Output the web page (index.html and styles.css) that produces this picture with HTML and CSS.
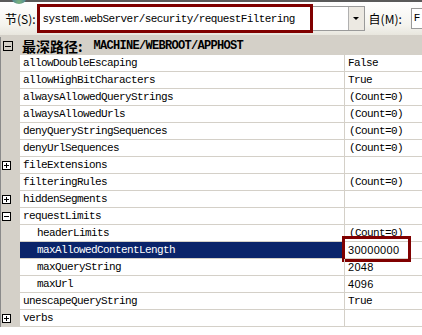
FILE: index.html
```html
<!DOCTYPE html>
<html>
<head>
<meta charset="utf-8">
<link rel="stylesheet" href="styles.css">
</head>
<body>
<div class="toolbar">
  <span class="globe"></span>
  <span class="label">节(S):</span>
  <div class="combo">
    <span class="combo-text">system.webServer/security/requestFiltering</span>
    <span class="combo-btn"><span class="tri"></span></span>
    <span class="hl hl-combo"></span>
  </div>
  <span class="label label-m">自(M):</span>
  <div class="from-box">F</div>
</div>
<div class="gap"></div>
<div class="grid">
  <div class="gut hdr"><span class="box minus big"></span></div>
  <div class="hdr hdr-text"><span class="cjk">最深路径:</span><span class="path">MACHINE/WEBROOT/APPHOST</span></div>
  <div class="hdr"></div>

  <div class="gut"></div><div class="name">allowDoubleEscaping</div><div class="val">False</div>
  <div class="gut"></div><div class="name">allowHighBitCharacters</div><div class="val">True</div>
  <div class="gut"></div><div class="name">alwaysAllowedQueryStrings</div><div class="val cnt">(Count=0)</div>
  <div class="gut"></div><div class="name">alwaysAllowedUrls</div><div class="val cnt">(Count=0)</div>
  <div class="gut"></div><div class="name">denyQueryStringSequences</div><div class="val cnt">(Count=0)</div>
  <div class="gut"></div><div class="name">denyUrlSequences</div><div class="val cnt">(Count=0)</div>
  <div class="gut"><span class="box plus"></span></div><div class="name">fileExtensions</div><div class="val"></div>
  <div class="gut"></div><div class="name">filteringRules</div><div class="val cnt">(Count=0)</div>
  <div class="gut"><span class="box plus"></span></div><div class="name">hiddenSegments</div><div class="val"></div>
  <div class="gut"><span class="box minus"></span></div><div class="name">requestLimits</div><div class="val"></div>
  <div class="gut"></div><div class="name sub">headerLimits</div><div class="val cnt">(Count=0)</div>
  <div class="gut"></div><div class="name sub sel">maxAllowedContentLength</div><div class="val num"><span>30000000</span><span class="hl hl-val"></span></div>
  <div class="gut"></div><div class="name sub">maxQueryString</div><div class="val num">2048</div>
  <div class="gut"></div><div class="name sub">maxUrl</div><div class="val num">4096</div>
  <div class="gut"></div><div class="name">unescapeQueryString</div><div class="val">True</div>
  <div class="gut"><span class="box plus"></span></div><div class="name">verbs</div><div class="val"></div>
</div>
</body>
</html>
```

FILE: styles.css
```css
* { box-sizing: border-box; }
html, body { margin: 0; padding: 0; }
body {
  width: 422px;
  height: 335px;
  overflow: hidden;
  background: #ffffff;
  font-family: "Liberation Mono", "Noto Sans CJK SC", monospace;
  font-size: 11px;
  letter-spacing: -0.6px;
  color: #000;
}
.toolbar {
  position: relative;
  height: 35px;
  border-top: 2px solid #5a5a5a;
  background: linear-gradient(#ffffff, #f4f3ee 70%, #e8e6de);
  display: flex;
  align-items: center;
  padding-left: 5px;
}
.globe {
  position: absolute;
  left: 12px;
  top: -8px;
  width: 14px;
  height: 10px;
  border-radius: 50%;
  background: radial-gradient(circle at 50% 80%, #7ab37a, #3a6fa8);
}
.label {
  font-size: 12px;
  letter-spacing: 0;
  font-family: "Noto Sans CJK SC", "Liberation Mono", monospace;
  line-height: 16px;
  margin-top: 1px;
}
.combo {
  position: relative;
  margin-left: 3px;
  width: 326px;
  height: 25px;
  border: 1px solid #9a9a9a;
  background: #fff;
  display: flex;
  align-items: center;
}
.combo-text {
  flex: 1;
  padding-left: 3px;
  font-size: 11px;
  line-height: 14px;
}
.combo-btn {
  width: 16px;
  height: 23px;
  background: #ece9e2;
  border-left: 1px solid #b0b0b0;
  display: flex;
  align-items: center;
  justify-content: center;
}
.tri {
  width: 0;
  height: 0;
  border-left: 3px solid transparent;
  border-right: 3px solid transparent;
  border-top: 3px solid #000;
}
.hl {
  position: absolute;
  border: 3px solid #800000;
  pointer-events: none;
}
.hl-combo {
  left: -3px;
  top: -3px;
  width: 276px;
  height: 29px;
}
.label-m { margin-left: 4px; }
.from-box {
  margin-left: 9px;
  height: 21px;
  flex: 1;
  border: 1px solid #9a9a9a;
  border-right: none;
  background: #fff;
  padding-left: 2px;
  line-height: 19px;
  font-size: 11px;
}
.gap {
  height: 2px;
  background: #d4d0c8;
}
.grid {
  display: grid;
  grid-template-columns: 20px 324px 1fr;
  grid-template-rows: 18px;
  grid-auto-rows: 17px;
  background: #fff;
}
.grid > div { border-bottom: 1px solid #d4d0c8; }
.grid .gut {
  background: #d4d0c8;
  border-bottom: none;
  border-left: 1px solid #8a8a8a;
  display: flex;
  align-items: center;
  padding-left: 1px;
}
.grid .hdr {
  background: #d4d0c8;
  border-bottom: none;
}
.hdr-text {
  display: flex;
  align-items: center;
  padding-left: 2px;
  font-weight: bold;
  white-space: nowrap;
}
.cjk {
  font-family: "Noto Sans CJK SC", sans-serif;
  font-size: 14px;
  letter-spacing: 0;
  font-weight: bold;
  line-height: 16px;
}
.path {
  margin-left: 11px;
  font-size: 12px;
  letter-spacing: -0.7px;
}
.box {
  width: 9px;
  height: 9px;
  border: 1px solid #000;
  background: #fff;
  position: relative;
}
.box.big { width: 10px; height: 10px; background: #d4d0c8; margin-left: 1px; }
.box::before {
  content: "";
  position: absolute;
  left: 1px;
  right: 1px;
  top: 3px;
  height: 1px;
  background: #000;
}
.box.big::before { top: 3.5px; }
.box.plus::after {
  content: "";
  position: absolute;
  top: 1px;
  bottom: 1px;
  left: 3px;
  width: 1px;
  background: #000;
}
.name {
  padding-left: 3px;
  line-height: 16px;
  white-space: nowrap;
}
.name.sub { padding-left: 17px; }
.name.sel { background: #0a246a; color: #fff; }
.val {
  position: relative;
  border-left: 1px solid #d4d0c8;
  padding-left: 3px;
  line-height: 16px;
  white-space: nowrap;
}
.val.cnt { padding-left: 4px; }
.val.num {
  font-family: "Liberation Sans", sans-serif;
  font-size: 11px;
  letter-spacing: 0.3px;
}
.hl-val {
  left: -3px;
  top: -6px;
  width: 69px;
  height: 26px;
}
```
